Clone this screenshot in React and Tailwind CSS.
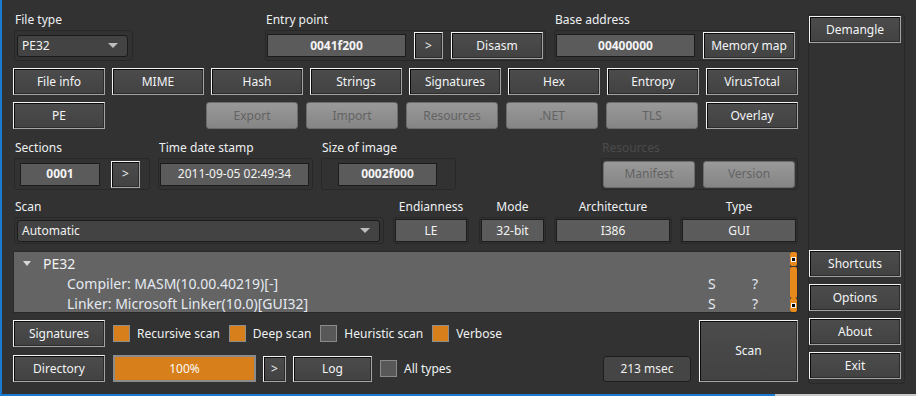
const font = "font-['Segoe_UI','Noto_Sans',sans-serif]";

const Btn = ({ children, className = '' }) => (
  <div
    className={`flex items-center justify-center bg-gradient-to-b from-[#4c4c4c] to-[#424242] text-[#f2f4f6] text-[12px] border border-t-[#f4f4f4] border-l-[#f4f4f4] border-r-[#a3a3a3] border-b-[#a3a3a3] shadow-[inset_1px_1px_0_#0c0c0c,inset_-1px_-1px_0_#2c2c2c] ${className}`}
  >
    {children}
  </div>
);

const DisBtn = ({ children, className = '' }) => (
  <div
    className={`flex items-center justify-center w-[92px] h-[27px] rounded-[3px] bg-gradient-to-b from-[#999999] to-[#858585] border border-[#6c6c6c] text-[#636363] text-[12px] ${className}`}
  >
    {children}
  </div>
);

const Value = ({ children, className = '', bold = true }) => (
  <div
    className={`flex items-center justify-center h-[23px] bg-[#5b5b5b] border border-[#1c1c1c] text-[#f4f4f4] text-[12px] ${bold ? 'font-bold' : ''} ${className}`}
  >
    {children}
  </div>
);

const Group = ({ children, className = '' }) => (
  <div className={`flex items-center border border-[#282828] rounded-[3px] ${className}`}>{children}</div>
);

const Label = ({ children, className = '', dim = false }) => (
  <div className={`h-[20px] leading-[20px] text-[12px] ${dim ? 'text-[#4b4b4b]' : 'text-[#eef0f2]'} ${className}`}>
    {children}
  </div>
);

const Combo = ({ text, className = '' }) => (
  <div
    className={`flex items-center justify-between h-[22px] pl-[4px] pr-[9px] bg-[#434343] border border-[#1b1b1b] rounded-[3px] text-[12px] text-[#f2f2f2] ${className}`}
  >
    <span>{text}</span>
    <span className="w-0 h-0 border-l-[5px] border-r-[5px] border-t-[5px] border-l-transparent border-r-transparent border-t-[#bdbdbd]" />
  </div>
);

const Check = ({ on, label, className = '' }) => (
  <div className={`flex items-center ${className}`}>
    <span
      className={`w-[17px] h-[17px] border ${on ? 'bg-[#d7801b] border-[#8e8e8e]' : 'bg-[#585858] border-[#8a8a8a]'}`}
    />
    <span className="ml-[7px] text-[12px] text-[#f0f2f4]">{label}</span>
  </div>
);

const ScrollCap = () => (
  <div className="flex items-center justify-center h-[14px] rounded-[2px] bg-[#e8891b]">
    <span className="w-[3px] h-[3px] bg-black ring-1 ring-[#f5f5f5]" />
  </div>
);

export default function App() {
  const row2 = ['File info', 'MIME', 'Hash', 'Strings', 'Signatures', 'Hex', 'Entropy', 'VirusTotal'];
  const row3 = ['Export', 'Import', 'Resources', '.NET', 'TLS'];

  return (
    <div className={`relative w-[916px] h-[396px] overflow-hidden bg-[#323232] border-l-2 border-[#1b7bd0] ${font}`}>
      <div className="flex pl-[11px] pt-[10px]">
        {/* main column */}
        <div className="w-[785px] flex flex-col">
          {/* row 1 */}
          <div className="flex items-start">
            <div className="ml-[1px] flex flex-col">
              <Label className="pl-[1px]">File type</Label>
              <Group className="w-[119px] h-[31px]">
                <Combo text="PE32" className="ml-[2px] w-[111px]" />
              </Group>
            </div>
            <div className="ml-[132px] flex flex-col">
              <Label className="pl-[1px]">Entry point</Label>
              <Group className="w-[281px] h-[31px]">
                <Value className="ml-[1px] w-[139px]">0041f200</Value>
                <Btn className="ml-[8px] w-[29px] h-[27px]">&gt;</Btn>
                <Btn className="ml-[8px] w-[92px] h-[27px]">Disasm</Btn>
              </Group>
            </div>
            <div className="ml-[8px] flex flex-col">
              <Label className="pl-[1px]">Base address</Label>
              <Group className="w-[245px] h-[31px]">
                <Value className="ml-[1px] w-[139px]">00400000</Value>
                <Btn className="ml-[8px] w-[92px] h-[27px]">Memory map</Btn>
              </Group>
            </div>
          </div>

          {/* row 2 */}
          <div className="mt-[7px] flex gap-[7px]">
            {row2.map((t) => (
              <Btn key={t} className="w-[92px] h-[27px]">
                {t}
              </Btn>
            ))}
          </div>

          {/* row 3 */}
          <div className="mt-[7px] flex">
            <Btn className="w-[92px] h-[27px]">PE</Btn>
            <div className="ml-[101px] flex gap-[8px]">
              {row3.map((t) => (
                <DisBtn key={t}>{t}</DisBtn>
              ))}
              <Btn className="w-[92px] h-[27px]">Overlay</Btn>
            </div>
          </div>

          {/* row 4 */}
          <div className="mt-[9px] flex items-start">
            <div className="ml-[1px] flex flex-col">
              <Label className="pl-[1px]">Sections</Label>
              <Group className="w-[136px] h-[32px]">
                <Value className="ml-[5px] w-[80px]">0001</Value>
                <Btn className="ml-[11px] w-[29px] h-[27px]">&gt;</Btn>
              </Group>
            </div>
            <div className="ml-[8px] flex flex-col">
              <Label className="pl-[1px]">Time date stamp</Label>
              <Group className="w-[155px] h-[32px]">
                <Value bold={false} className="ml-[1px] w-[149px]">
                  2011-09-05 02:49:34
                </Value>
              </Group>
            </div>
            <div className="ml-[8px] flex flex-col">
              <Label className="pl-[1px]">Size of image</Label>
              <Group className="w-[135px] h-[32px]">
                <Value className="ml-[16px] w-[99px]">0002f000</Value>
              </Group>
            </div>
            <div className="ml-[145px] flex flex-col">
              <Label dim className="pl-[1px]">Resources</Label>
              <Group className="w-[197px] h-[32px]">
                <DisBtn className="ml-[1px]">Manifest</DisBtn>
                <DisBtn className="ml-[8px]">Version</DisBtn>
              </Group>
            </div>
          </div>

          {/* row 5 */}
          <div className="mt-[7px] flex items-start">
            <div className="ml-[1px] flex flex-col">
              <Label className="pl-[1px]">Scan</Label>
              <Group className="w-[370px] h-[27px]">
                <Combo text="Automatic" className="ml-[2px] w-[363px]" />
              </Group>
            </div>
            {[
              ['Endianness', 'LE', 'ml-[9px] w-[76px]', 'w-[72px]'],
              ['Mode', '32-bit', 'ml-[10px] w-[67px]', 'w-[63px]'],
              ['Architecture', 'I386', 'ml-[8px] w-[118px]', 'w-[114px]'],
              ['Type', 'GUI', 'ml-[8px] w-[118px]', 'w-[114px]'],
            ].map(([l, v, g, b]) => (
              <div key={l} className={`flex flex-col items-center ${g}`}>
                <Label>{l}</Label>
                <Group className="w-full h-[27px] justify-center">
                  <Value bold={false} className={b}>
                    {v}
                  </Value>
                </Group>
              </div>
            ))}
          </div>

          {/* tree */}
          <div className="mt-[7px] flex h-[62px] bg-[#646464] border border-[#2a2a2a] text-[14px] text-[#e4eaf1]">
            <div className="flex-1 flex flex-col pt-[1px]">
              <div className="h-[20px] flex items-center">
                <span className="ml-[9px] w-0 h-0 border-l-[4px] border-r-[4px] border-t-[5px] border-l-transparent border-r-transparent border-t-[#d8d8d8]" />
                <span className="ml-[12px] text-[#f2f2f2]">PE32</span>
              </div>
              {['Compiler: MASM(10.00.40219)[-]', 'Linker: Microsoft Linker(10.0)[GUI32]'].map((t) => (
                <div key={t} className="h-[20px] flex items-center">
                  <span className="ml-[53px] w-[641px]">{t}</span>
                  <span className="w-[44px]">S</span>
                  <span>?</span>
                </div>
              ))}
            </div>
            <div className="w-[7px] flex flex-col bg-[#3a3a3a]">
              <ScrollCap />
              <div className="mt-[1px] h-[31px] rounded-[2px] bg-[#e8891b]" />
              <div className="flex-1" />
              <ScrollCap />
            </div>
          </div>

          {/* bottom rows */}
          <div className="mt-[7px] flex">
            <div className="w-[678px] flex flex-col">
              <div className="flex items-center">
                <Btn className="w-[92px] h-[27px]">Signatures</Btn>
                <Check on label="Recursive scan" className="ml-[8px]" />
                <Check on label="Deep scan" className="ml-[9px]" />
                <Check label="Heuristic scan" className="ml-[9px]" />
                <Check on label="Verbose" className="ml-[9px]" />
              </div>
              <div className="mt-[8px] flex items-center">
                <Btn className="w-[92px] h-[27px]">Directory</Btn>
                <div className="ml-[8px] w-[143px] h-[27px] flex items-center justify-center bg-[#d7801b] border-2 border-[#8b8b8b] text-[12px] text-[#fafafa]">
                  100%
                </div>
                <Btn className="ml-[7px] w-[23px] h-[26px]">&gt;</Btn>
                <Btn className="ml-[7px] w-[79px] h-[26px]">Log</Btn>
                <Check label="All types" className="ml-[8px]" />
                <div className="ml-auto w-[88px] h-[26px] flex items-center justify-center rounded-[3px] bg-[#454545] border border-[#1e1e1e] text-[12px] text-[#f0f0f0]">
                  213 msec
                </div>
              </div>
            </div>
            <Btn className="ml-[8px] w-[99px] h-[62px]">Scan</Btn>
          </div>
        </div>

        {/* right column */}
        <div className="ml-[10px] mt-[4px] w-[97px] h-[370px] flex flex-col border border-[#282828] rounded-[3px]">
          <Btn className="mt-[1px] w-[92px] h-[27px]">Demangle</Btn>
          <div className="mt-auto mb-[4px] flex flex-col gap-[7px]">
            {['Shortcuts', 'Options', 'About', 'Exit'].map((t) => (
              <Btn key={t} className="w-[92px] h-[27px]">
                {t}
              </Btn>
            ))}
          </div>
        </div>
      </div>

      {/* window bottom edge */}
      <div className="absolute left-0 bottom-0 w-full h-[2px] flex">
        <div className="w-[773px] bg-[#1b7bd0]" />
        <div className="flex-1 bg-[#c9c9c9]" />
      </div>
    </div>
  );
}
